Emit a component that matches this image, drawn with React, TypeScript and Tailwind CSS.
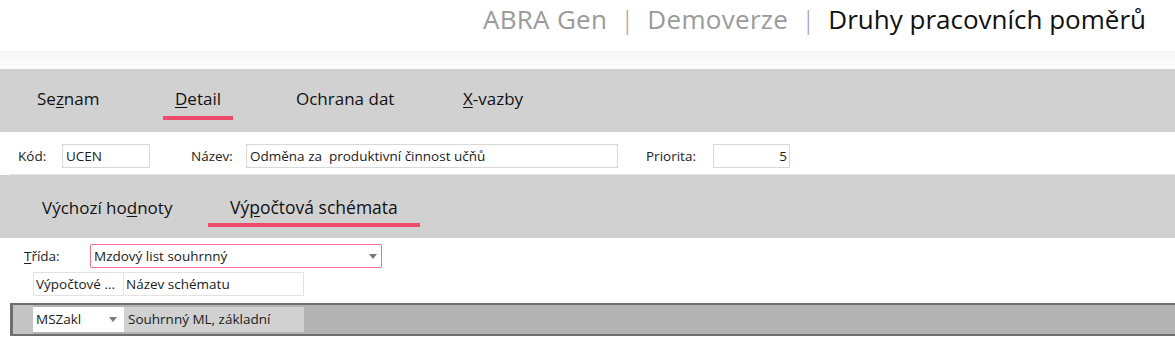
import React from 'react'

const font = { fontFamily: '"Open Sans", "Noto Sans", sans-serif' }

function Arrow() {
  return (
    <svg width="8" height="5" viewBox="0 0 8 5" className="shrink-0">
      <path d="M0 0 L8 0 L4 5 Z" fill="#7a7a7a" />
    </svg>
  )
}

function Tab({ label, width, pad }: { label: React.ReactNode; width: string; pad: string }) {
  return (
    <div className={`${width} shrink-0`}>
      <div className={`inline-flex flex-col ${pad}`}>
        <span className="text-[17px] leading-[23px] text-[#111]">{label}</span>
      </div>
    </div>
  )
}

export default function App() {
  return (
    <div className="w-[1175px] h-[340px] overflow-hidden bg-white text-[#1b1b1b]" style={font}>
      {/* title */}
      <div className="h-[51px] flex justify-end items-start pt-[1px] pr-[29px] text-[26px] leading-[37px]">
        <span className="text-[#9a9a9a] tracking-[0.3px]">ABRA Gen</span>
        <span className="mx-[13px] text-[#9c9ca8] font-light">|</span>
        <span className="text-[#9a9a9a] tracking-[0.3px]">Demoverze</span>
        <span className="mx-[13px] text-[#9c9ca8] font-light">|</span>
        <span className="text-[#111]">Druhy pracovních poměrů</span>
      </div>
      <div className="h-[18px] bg-gradient-to-b from-[#f5f5f5] to-[#fdfdfd]" />

      {/* main tabs */}
      <div className="h-[63px] bg-[#d1d1d1] flex pl-[25px] pt-[18px]">
        <div className="w-[138px] shrink-0">
          <div className="inline-flex flex-col px-[12px]">
            <span className="text-[17px] leading-[23px] text-[#111]">
              Se<span className="underline underline-offset-2">z</span>nam
            </span>
          </div>
        </div>
        <div className="w-[121px] shrink-0">
          <div className="inline-flex flex-col">
            <span className="px-[12px] text-[17px] leading-[23px] text-[#111]">
              <span className="underline underline-offset-2">D</span>etail
            </span>
            <div className="mt-[6px] h-[4px] bg-[#ee4a6a]" />
          </div>
        </div>
        <Tab label="Ochrana dat" width="w-[167px]" pad="px-[12px]" />
        <Tab
          label={
            <>
              <span className="underline underline-offset-2">X</span>-vazby
            </>
          }
          width="w-[100px]"
          pad="px-[12px]"
        />
      </div>

      {/* header fields */}
      <div className="ml-[10px] h-[43px] bg-white border-b border-[#e4e4e4] flex items-start pt-[12px] pl-[8px] text-[13.5px]">
        <div className="w-[44px] h-[24px] flex items-center text-[#222]">Kód:</div>
        <div className="w-[88px] h-[24px] border border-[#d8d8d8] flex items-center px-[3px]">UCEN</div>
        <div className="w-[96px] h-[24px] flex items-center pl-[41px] text-[#222]">Název:</div>
        <div className="w-[372px] h-[24px] border border-[#d8d8d8] flex items-center px-[3px] whitespace-pre">
          Odměna za  produktivní činnost učňů
        </div>
        <div className="w-[95px] h-[24px] flex items-center pl-[28px] text-[#222]">Priorita:</div>
        <div className="w-[77px] h-[24px] border border-[#d8d8d8] flex items-center justify-end px-[2px]">5</div>
      </div>

      {/* sub tabs */}
      <div className="h-[63px] bg-[#d1d1d1] flex pl-[19px] pt-[21px]">
        <div className="w-[189px] shrink-0">
          <div className="inline-flex flex-col px-[23px]">
            <span className="text-[17px] leading-[23px] text-[#111]">
              Výchozí ho<span className="underline underline-offset-2">d</span>noty
            </span>
          </div>
        </div>
        <div className="shrink-0">
          <div className="inline-flex flex-col">
            <span className="px-[22px] text-[17.5px] leading-[23px] text-[#111]">
              Vý<span className="underline underline-offset-2">p</span>očtová schémata
            </span>
            <div className="mt-[4px] h-[4px] bg-[#ee4a6a]" />
          </div>
        </div>
      </div>

      {/* schema panel */}
      <div className="ml-[10px] bg-white text-[13.5px]">
        <div className="h-[65px] flex flex-col pt-[6px]">
          <div className="flex items-center h-[24px] pl-[14px]">
            <div className="w-[66px] text-[#222]">
              <span className="underline underline-offset-2">T</span>řída:
            </div>
            <div className="w-[292px] h-[24px] border border-[#ec6f8c] rounded-[2px] flex items-center justify-between pl-[3px] pr-[4px]">
              <span>Mzdový list souhrnný</span>
              <Arrow />
            </div>
          </div>
          <div className="flex mt-[4px] pl-[23px] h-[24px]">
            <div className="w-[91px] border border-[#e2e2e2] flex items-center px-[2px] truncate">Výpočtové ...</div>
            <div className="w-[180px] border border-l-0 border-[#e2e2e2] flex items-center px-[2px]">Název schématu</div>
          </div>
        </div>
        <div className="h-[33px] bg-[#b3b3b3] border-y-2 border-[#6f6f6f] flex">
          <div className="w-[3px] bg-[#6f6f6f]" />
          <div className="w-[20px] bg-[#c4c4c4]" />
          <div className="flex items-center py-[2px]">
            <div className="w-[91px] h-full bg-white flex items-center justify-between pl-[3px] pr-[7px]">
              <span>MSZakl</span>
              <Arrow />
            </div>
            <div className="w-[180px] h-full bg-[#d1d1d1] flex items-center px-[4px]">Souhrnný ML, základní</div>
          </div>
        </div>
      </div>
    </div>
  )
}
